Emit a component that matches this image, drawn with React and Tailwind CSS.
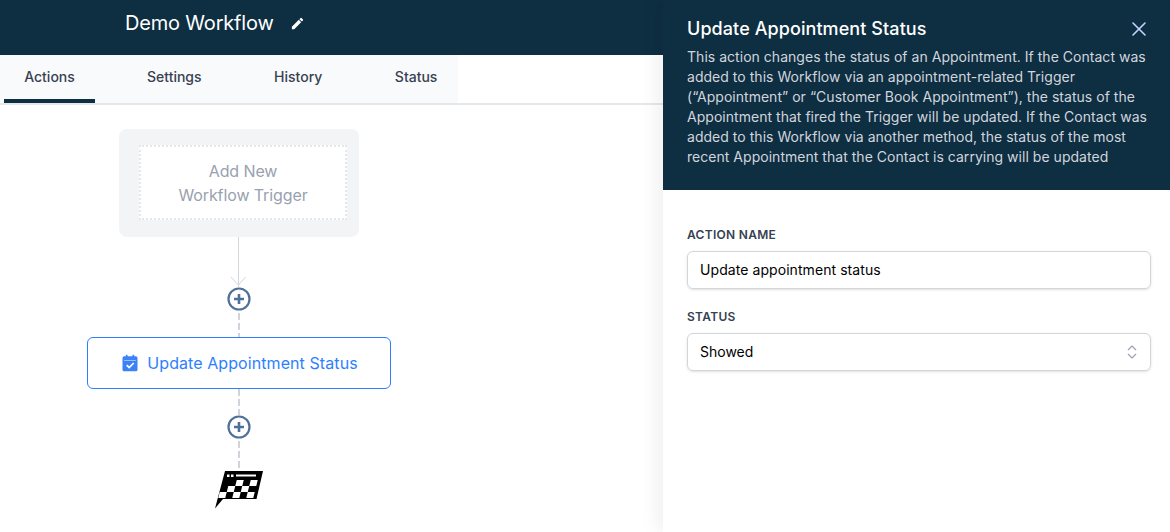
import React from "react";
import { X, ChevronsUpDown } from "lucide-react";
import { MdEdit } from "react-icons/md";

function PlusCircle() {
  return (
    <svg width="24" height="24" viewBox="0 0 24 24" className="shrink-0">
      <circle cx="12" cy="12" r="10.500" fill="white" stroke="#50709a" strokeWidth="2.200" />
      <path d="M12 7v10M7 12h10" stroke="#50709a" strokeWidth="2.600" />
    </svg>
  );
}

function Dashes({ height }) {
  return (
    <div
      className="w-[2px] shrink-0 bg-[repeating-linear-gradient(to_bottom,#d1d5db_0,#d1d5db_7px,transparent_7px,transparent_10px)]"
      style={{ height }}
    />
  );
}

function FinishFlag() {
  const squares = [
    [22, 9], [36, 9],
    [15, 15], [29, 15],
    [8, 21], [22, 21], [36, 21],
  ];

  return (
    <svg width="48" height="38" viewBox="0 0 48 38">
      <path d="M10 0H48L41.500 28H8L0 37.500Z" fill="black" />
      <path d="M12 3.500h2.500v2.500h-2.500zM16 3.500h2.500v2.500h-2.500zM21 3.500H41V5.500H21z" fill="white" />
      <g transform="translate(2 8) skewX(-14) translate(-2 -8)">
        {squares.map(([x, y]) => (
          <rect key={`${x}-${y}`} x={x} y={y} width="7" height="6" fill="white" />
        ))}
      </g>
    </svg>
  );
}

function App() {
  const tabs = ["Settings", "History", "Status"];

  return (
    <div className="flex h-[532px] w-[1170px] overflow-hidden bg-white font-['Inter',sans-serif]">

      {/* LEFT SIDE */}

      <div className="flex w-[663px] shrink-0 flex-col">

        <div className="flex h-[55px] shrink-0 items-center bg-[#0e2e42] pb-[9px] pl-[125px]">
          <h1 className="text-[20px] leading-[28px] tracking-[-0.18px] text-white">Demo Workflow</h1>
          <MdEdit className="ml-[16px] text-white" size={15} />
        </div>

        <div className="h-[50px] shrink-0 border-b-2 border-gray-200 bg-white">
          <div className="flex h-[48px] w-[458px] bg-[#f9fafb] pl-[4px] text-sm font-medium text-[#374151]">
            <div className="flex h-[48px] w-[91px] items-center justify-center border-b-4 border-[#0e2e42]">
              Actions
            </div>
            <div className="flex items-center gap-[72.5px] pb-[4px] pl-[52px]">
              {tabs.map((tab) => (
                <span key={tab}>{tab}</span>
              ))}
            </div>
          </div>
        </div>

        {/* CANVAS */}

        <div className="flex w-[478px] flex-col items-center pt-[24px]">

          <div className="h-[108px] w-[240px] rounded-lg bg-gray-100 px-[20px] pt-[16px]">
            <div className="flex h-[75px] w-[208px] items-center justify-center border-2 border-dotted border-gray-200 bg-white text-center text-base leading-[24px] tracking-[-0.1px] text-gray-400">
              Add New
              <br />
              Workflow Trigger
            </div>
          </div>

          <div className="relative mr-[1px] h-[50px] w-[1px] shrink-0 bg-gray-300">
            <svg width="16" height="10" viewBox="0 0 16 10" className="absolute bottom-[1px] left-[-8px]">
              <path d="M1 1l7.500 8L15.500 1" fill="none" stroke="#d1d5db" strokeWidth="1" />
            </svg>
          </div>

          <PlusCircle />
          <div className="h-[2px] shrink-0" />
          <Dashes height={24} />

          <div className="flex h-[52px] w-[304px] shrink-0 items-center justify-center gap-[7px] rounded-md border border-blue-500 bg-white text-base tracking-[0.08px] text-blue-500">
            <svg width="20" height="20" viewBox="0 0 24 24" fill="#3b82f6">
              <path d="M7 2h2v2h6V2h2v2h2a2 2 0 0 1 2 2v14a2 2 0 0 1-2 2H5a2 2 0 0 1-2-2V6a2 2 0 0 1 2-2h2V2zM5 8.500V9h14v-.500H5z" />
              <path d="M8 14.500l3 3 5.500-5.500" fill="none" stroke="white" strokeWidth="2" />
            </svg>
            Update Appointment Status
          </div>

          <Dashes height={26} />
          <PlusCircle />
          <div className="h-[2px] shrink-0" />
          <Dashes height={27} />
          <div className="h-[3px] shrink-0" />
          <FinishFlag />
        </div>
      </div>

      {/* RIGHT PANEL */}

      <div className="z-10 flex flex-1 flex-col bg-white shadow-[-8px_0_16px_rgba(0,0,0,0.05)]">

        <div className="h-[190px] shrink-0 bg-[#0e2e42] pl-[24px] pr-[19px] pt-[16px]">
          <div className="flex h-[26px] items-center justify-between">
            <h2 className="text-lg font-medium leading-[26px] tracking-[0.08px] text-white">Update Appointment Status</h2>
            <X className="text-indigo-200" size={24} strokeWidth={1.6} />
          </div>
          <p className="mt-[5px] text-sm leading-[20px] tracking-[0.03px] text-gray-300">
            This action changes the status of an Appointment. If the Contact was
            <br />
            added to this Workflow via an appointment-related Trigger
            <br />
            (“Appointment” or “Customer Book Appointment”), the status of the
            <br />
            Appointment that fired the Trigger will be updated. If the Contact was
            <br />
            added to this Workflow via another method, the status of the most
            <br />
            recent Appointment that the Contact is carrying will be updated
          </p>
        </div>

        <div className="pl-[24px] pr-[19px] pt-[37px]">

          <label className="block text-xs font-semibold leading-[16px] tracking-[0.3px] text-gray-700">ACTION NAME</label>
          <div className="mt-[8px] flex h-[38px] items-center rounded-md border border-gray-300 px-[12px] text-sm tracking-[0.07px] text-black shadow-sm">
            Update appointment status
          </div>

          <label className="mt-[20px] block text-xs font-semibold leading-[16px] tracking-[0.3px] text-gray-700">STATUS</label>
          <div className="mt-[8px] flex h-[38px] items-center justify-between rounded-md border border-gray-300 pl-[12px] pr-[9px] text-sm text-black shadow-sm">
            Showed
            <ChevronsUpDown className="text-gray-400" size={18} strokeWidth={1.5} />
          </div>

        </div>
      </div>
    </div>
  );
}

export default App;
